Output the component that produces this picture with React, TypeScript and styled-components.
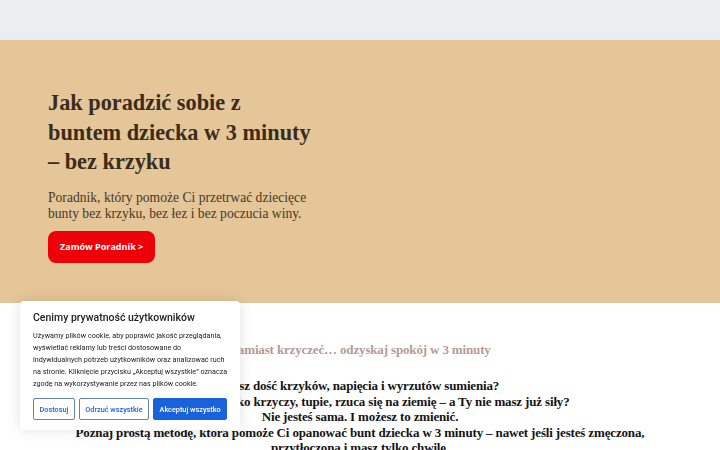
import React from 'react'
import styled, { createGlobalStyle } from 'styled-components'

const GlobalStyle = createGlobalStyle`
  html, body {
    margin: 0;
    padding: 0;
    background: #ffffff;
    overflow: hidden;
  }
`

const serif = `'Liberation Serif', 'DejaVu Serif', serif`

export default function App() {
  return (
    <>
      <GlobalStyle />
      <Page>
        <TopBar />
        <Hero>
          <HeroTitle>
            Jak poradzić sobie z<br />
            buntem dziecka w 3 minuty
            <br />– bez krzyku
          </HeroTitle>
          <HeroLead>
            Poradnik, który pomoże Ci przetrwać dziecięce
            <br />
            bunty bez krzyku, bez łez i bez poczucia winy.
          </HeroLead>
          <OrderButton>Zamów Poradnik &gt;</OrderButton>
        </Hero>
        <Intro>
          <IntroTagline>Zamiast krzyczeć… odzyskaj spokój w 3 minuty</IntroTagline>
          <IntroText>
            Masz dość krzyków, napięcia i wyrzutów sumienia?
            <br />
            Gdy twoje dziecko krzyczy, tupie, rzuca się na ziemię – a Ty nie masz już siły?
            <br />
            Nie jesteś sama. I możesz to zmienić.
            <br />
            Poznaj prostą metodę, która pomoże Ci opanować bunt dziecka w 3 minuty – nawet jeśli
            jesteś zmęczona,
            <br />
            przytłoczona i masz tylko chwilę.
          </IntroText>
        </Intro>
      </Page>
      <CookieBanner />
    </>
  )
}

const CookieBanner = () => {
  return (
    <CookieBox>
      <CookieTitle>Cenimy prywatność użytkowników</CookieTitle>
      <CookieText>
        Używamy plików cookie, aby poprawić jakość przeglądania,
        <br />
        wyświetlać reklamy lub treści dostosowane do
        <br />
        indywidualnych potrzeb użytkowników oraz analizować ruch
        <br />
        na stronie. Kliknięcie przycisku „Akceptuj wszystkie” oznacza
        <br />
        zgodę na wykorzystywanie przez nas plików cookie.
      </CookieText>
      <CookieActions>
        <CookieButton>Dostosuj</CookieButton>
        <CookieButton>Odrzuć wszystkie</CookieButton>
        <CookieButton $primary>Akceptuj wszystko</CookieButton>
      </CookieActions>
    </CookieBox>
  )
}

const Page = styled.div`
  width: 720px;
  min-height: 450px;
`

const TopBar = styled.div`
  height: 34px;
  background: #ebeef0;
  border-bottom: 6px solid #e7ebf3;
`

const Hero = styled.section`
  background: #e4c698;
  height: 263px;
  box-sizing: border-box;
  padding: 48px 48px 0;
  display: flex;
  flex-direction: column;
  align-items: flex-start;
`

const HeroTitle = styled.h1`
  margin: 0;
  font-family: ${serif};
  font-weight: 700;
  font-size: 22.3px;
  line-height: 29.5px;
  color: #3b2c1c;
  white-space: nowrap;
`

const HeroLead = styled.p`
  margin: 13px 0 0;
  font-family: ${serif};
  font-size: 13.6px;
  line-height: 16px;
  color: #4a3826;
  white-space: nowrap;
`

const OrderButton = styled.button`
  margin-top: 9px;
  height: 32px;
  padding: 0 12px;
  border: none;
  border-radius: 8px;
  background: #ee0009;
  color: #ffffff;
  font-family: 'Open Sans', sans-serif;
  font-weight: 700;
  font-size: 9px;
`

const Intro = styled.section`
  padding-top: 39px;
  text-align: center;
`

const IntroTagline = styled.h3`
  margin: 0;
  font-family: ${serif};
  font-weight: 700;
  font-size: 13px;
  letter-spacing: -0.15px;
  line-height: 16px;
  color: #b49a96;
`

const IntroText = styled.p`
  margin: 20px 0 0;
  font-family: ${serif};
  font-weight: 700;
  font-size: 13px;
  letter-spacing: -0.15px;
  line-height: 15.5px;
  color: #141414;
`

const CookieBox = styled.div`
  position: fixed;
  left: 20px;
  top: 301px;
  width: 220px;
  height: 129px;
  box-sizing: border-box;
  padding: 10px 13px 0;
  background: #ffffff;
  border-radius: 4px;
  box-shadow: 0 0 14px rgba(0, 0, 0, 0.12);
  font-family: Roboto, 'Liberation Sans', sans-serif;
`

const CookieTitle = styled.div`
  font-size: 10.5px;
  font-weight: 500;
  line-height: 14px;
  color: #212121;
`

const CookieText = styled.p`
  margin: 5px 0 0;
  font-size: 7.2px;
  line-height: 12px;
  color: #212121;
  white-space: nowrap;
`

const CookieActions = styled.div`
  display: flex;
  gap: 4px;
  margin-top: 8px;
`

const CookieButton = styled.button<{ $primary?: boolean }>`
  height: 22px;
  padding: 0 5.5px;
  border: 1.5px solid;
  border-color: ${({ $primary }) => ($primary ? '#1863dc' : '#6383b3')};
  border-radius: 2px;
  background: ${({ $primary }) => ($primary ? '#1863dc' : '#ffffff')};
  color: ${({ $primary }) => ($primary ? '#ffffff' : '#1863dc')};
  font-family: Roboto, 'Liberation Sans', sans-serif;
  font-weight: 500;
  font-size: 7.3px;
  white-space: nowrap;
`
